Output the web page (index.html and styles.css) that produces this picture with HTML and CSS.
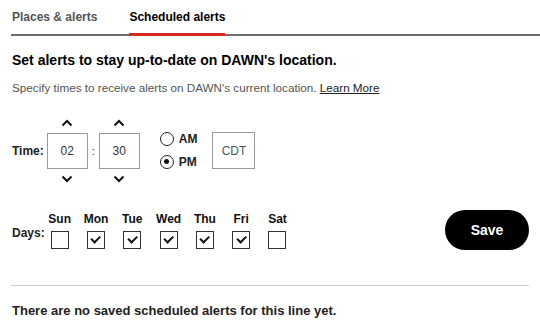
FILE: index.html
```html
<!DOCTYPE html>
<html>
<head>
<meta charset="utf-8">
<link rel="stylesheet" href="styles.css">
</head>
<body>
<nav class="tabs">
  <div class="tab">Places &amp; alerts</div>
  <div class="tab active">Scheduled alerts</div>
</nav>
<main class="content">
  <h1 class="title">Set alerts to stay up-to-date on DAWN's location.</h1>
  <p class="sub">Specify times to receive alerts on DAWN's current location. <a class="link">Learn More</a></p>

  <div class="time-row">
    <span class="label">Time:</span>
    <div class="spinner">
      <svg class="chev" width="12" height="8" viewBox="0 0 12 8"><path d="M1.5 6.5 L6 2 L10.5 6.5" fill="none" stroke="#111" stroke-width="2"/></svg>
      <div class="field">02</div>
      <svg class="chev" width="12" height="8" viewBox="0 0 12 8"><path d="M1.5 1.5 L6 6 L10.5 1.5" fill="none" stroke="#111" stroke-width="2"/></svg>
    </div>
    <span class="colon">:</span>
    <div class="spinner">
      <svg class="chev" width="12" height="8" viewBox="0 0 12 8"><path d="M1.5 6.5 L6 2 L10.5 6.5" fill="none" stroke="#111" stroke-width="2"/></svg>
      <div class="field">30</div>
      <svg class="chev" width="12" height="8" viewBox="0 0 12 8"><path d="M1.5 1.5 L6 6 L10.5 1.5" fill="none" stroke="#111" stroke-width="2"/></svg>
    </div>
    <div class="radios">
      <div class="radio"><span class="circle"></span><span>AM</span></div>
      <div class="radio"><span class="circle on"></span><span>PM</span></div>
    </div>
    <div class="zone">CDT</div>
  </div>

  <div class="days-row">
    <span class="label days-label">Days:</span>
    <div class="days">
      <div class="day"><span>Sun</span><span class="box"></span></div>
      <div class="day"><span>Mon</span><span class="box checked"></span></div>
      <div class="day"><span>Tue</span><span class="box checked"></span></div>
      <div class="day"><span>Wed</span><span class="box checked"></span></div>
      <div class="day"><span>Thu</span><span class="box checked"></span></div>
      <div class="day"><span>Fri</span><span class="box checked"></span></div>
      <div class="day"><span>Sat</span><span class="box"></span></div>
    </div>
    <button class="save">Save</button>
  </div>

  <hr class="divider">
  <p class="empty">There are no saved scheduled alerts for this line yet.</p>
</main>
</body>
</html>
```
FILE: styles.css
```css
html, body {
  margin: 0;
  padding: 0;
  background: #fff;
  font-family: "Liberation Sans", Arial, sans-serif;
  color: #111;
}
.tabs {
  display: flex;
  align-items: flex-start;
  gap: 32px;
  margin-left: 11px;
  padding-left: 1px;
  border-bottom: 2px solid #6e6e6e;
}
.tab {
  font-size: 12px;
  font-weight: bold;
  line-height: 14px;
  padding: 10px 0 9px;
  color: #555;
}
.tab.active {
  color: #000;
  border-bottom: 3px solid #d52b1e;
  margin-bottom: -2px;
}
.content {
  padding: 0 11px 0 12px;
}
.title {
  font-size: 14px;
  font-weight: bold;
  margin: 15px 0 0;
  line-height: 18px;
  color: #000;
}
.sub {
  font-size: 11.7px;
  color: #555;
  margin: 12px 0 0;
  line-height: 14px;
}
.link {
  color: #222;
  text-decoration: underline;
}
.time-row {
  display: flex;
  align-items: center;
  margin-top: 24px;
}
.label {
  font-size: 12px;
  font-weight: bold;
  color: #222;
}
.spinner {
  display: flex;
  flex-direction: column;
  align-items: center;
}
.time-row .label {
  margin-right: 3px;
}
.chev {
  display: block;
}
.spinner .chev:first-child {
  margin-bottom: 6px;
}
.spinner .chev:last-child {
  margin-top: 6px;
}
.field {
  width: 41px;
  height: 36px;
  box-sizing: border-box;
  border: 1px solid #9a9a9a;
  display: flex;
  align-items: center;
  justify-content: center;
  font-size: 12px;
  color: #333;
}
.colon {
  width: 11px;
  text-align: center;
  font-size: 11px;
  color: #333;
}
.radios {
  display: flex;
  flex-direction: column;
  gap: 9px;
  margin-left: 20px;
  margin-top: -2px;
}
.radio {
  display: flex;
  align-items: center;
  gap: 5px;
  font-size: 12px;
  font-weight: bold;
  color: #222;
}
.circle {
  width: 14px;
  height: 14px;
  box-sizing: border-box;
  border: 1.5px solid #222;
  border-radius: 50%;
  display: flex;
  align-items: center;
  justify-content: center;
}
.circle.on::after {
  content: "";
  width: 5px;
  height: 5px;
  border-radius: 50%;
  background: #111;
}
.zone {
  width: 43px;
  height: 37px;
  box-sizing: border-box;
  border: 1px solid #9a9a9a;
  display: flex;
  align-items: center;
  justify-content: center;
  font-size: 12px;
  color: #555;
  margin-left: 15px;
  margin-top: -1px;
}
.days-row {
  display: flex;
  align-items: center;
  margin-top: 27px;
}
.days-label {
  margin-top: 6px;
}
.days {
  display: flex;
  gap: 6.3px;
  margin-left: 0;
}
.day {
  width: 30px;
  display: flex;
  flex-direction: column;
  align-items: center;
  gap: 5px;
  font-size: 12px;
  font-weight: bold;
  color: #111;
}
.box {
  width: 18px;
  height: 18px;
  box-sizing: border-box;
  border: 1.5px solid #333;
  display: flex;
  align-items: center;
  justify-content: center;
}
.box.checked::after {
  content: "";
  width: 7px;
  height: 3.5px;
  border-left: 2px solid #111;
  border-bottom: 2px solid #111;
  transform: translateY(-1.5px) rotate(-45deg);
}
.save {
  margin-left: auto;
  width: 84px;
  height: 40px;
  border: none;
  border-radius: 20px;
  background: #000;
  color: #fff;
  font-family: "Liberation Sans", Arial, sans-serif;
  font-size: 14px;
  font-weight: bold;
  margin-right: 0;
}
.divider {
  border: none;
  border-top: 1px solid #d0d0d0;
  margin: 35px 0 0 -1px;
}
.empty {
  font-size: 13px;
  font-weight: bold;
  color: #222;
  margin: 17px 0 0;
  line-height: 16px;
}
```
